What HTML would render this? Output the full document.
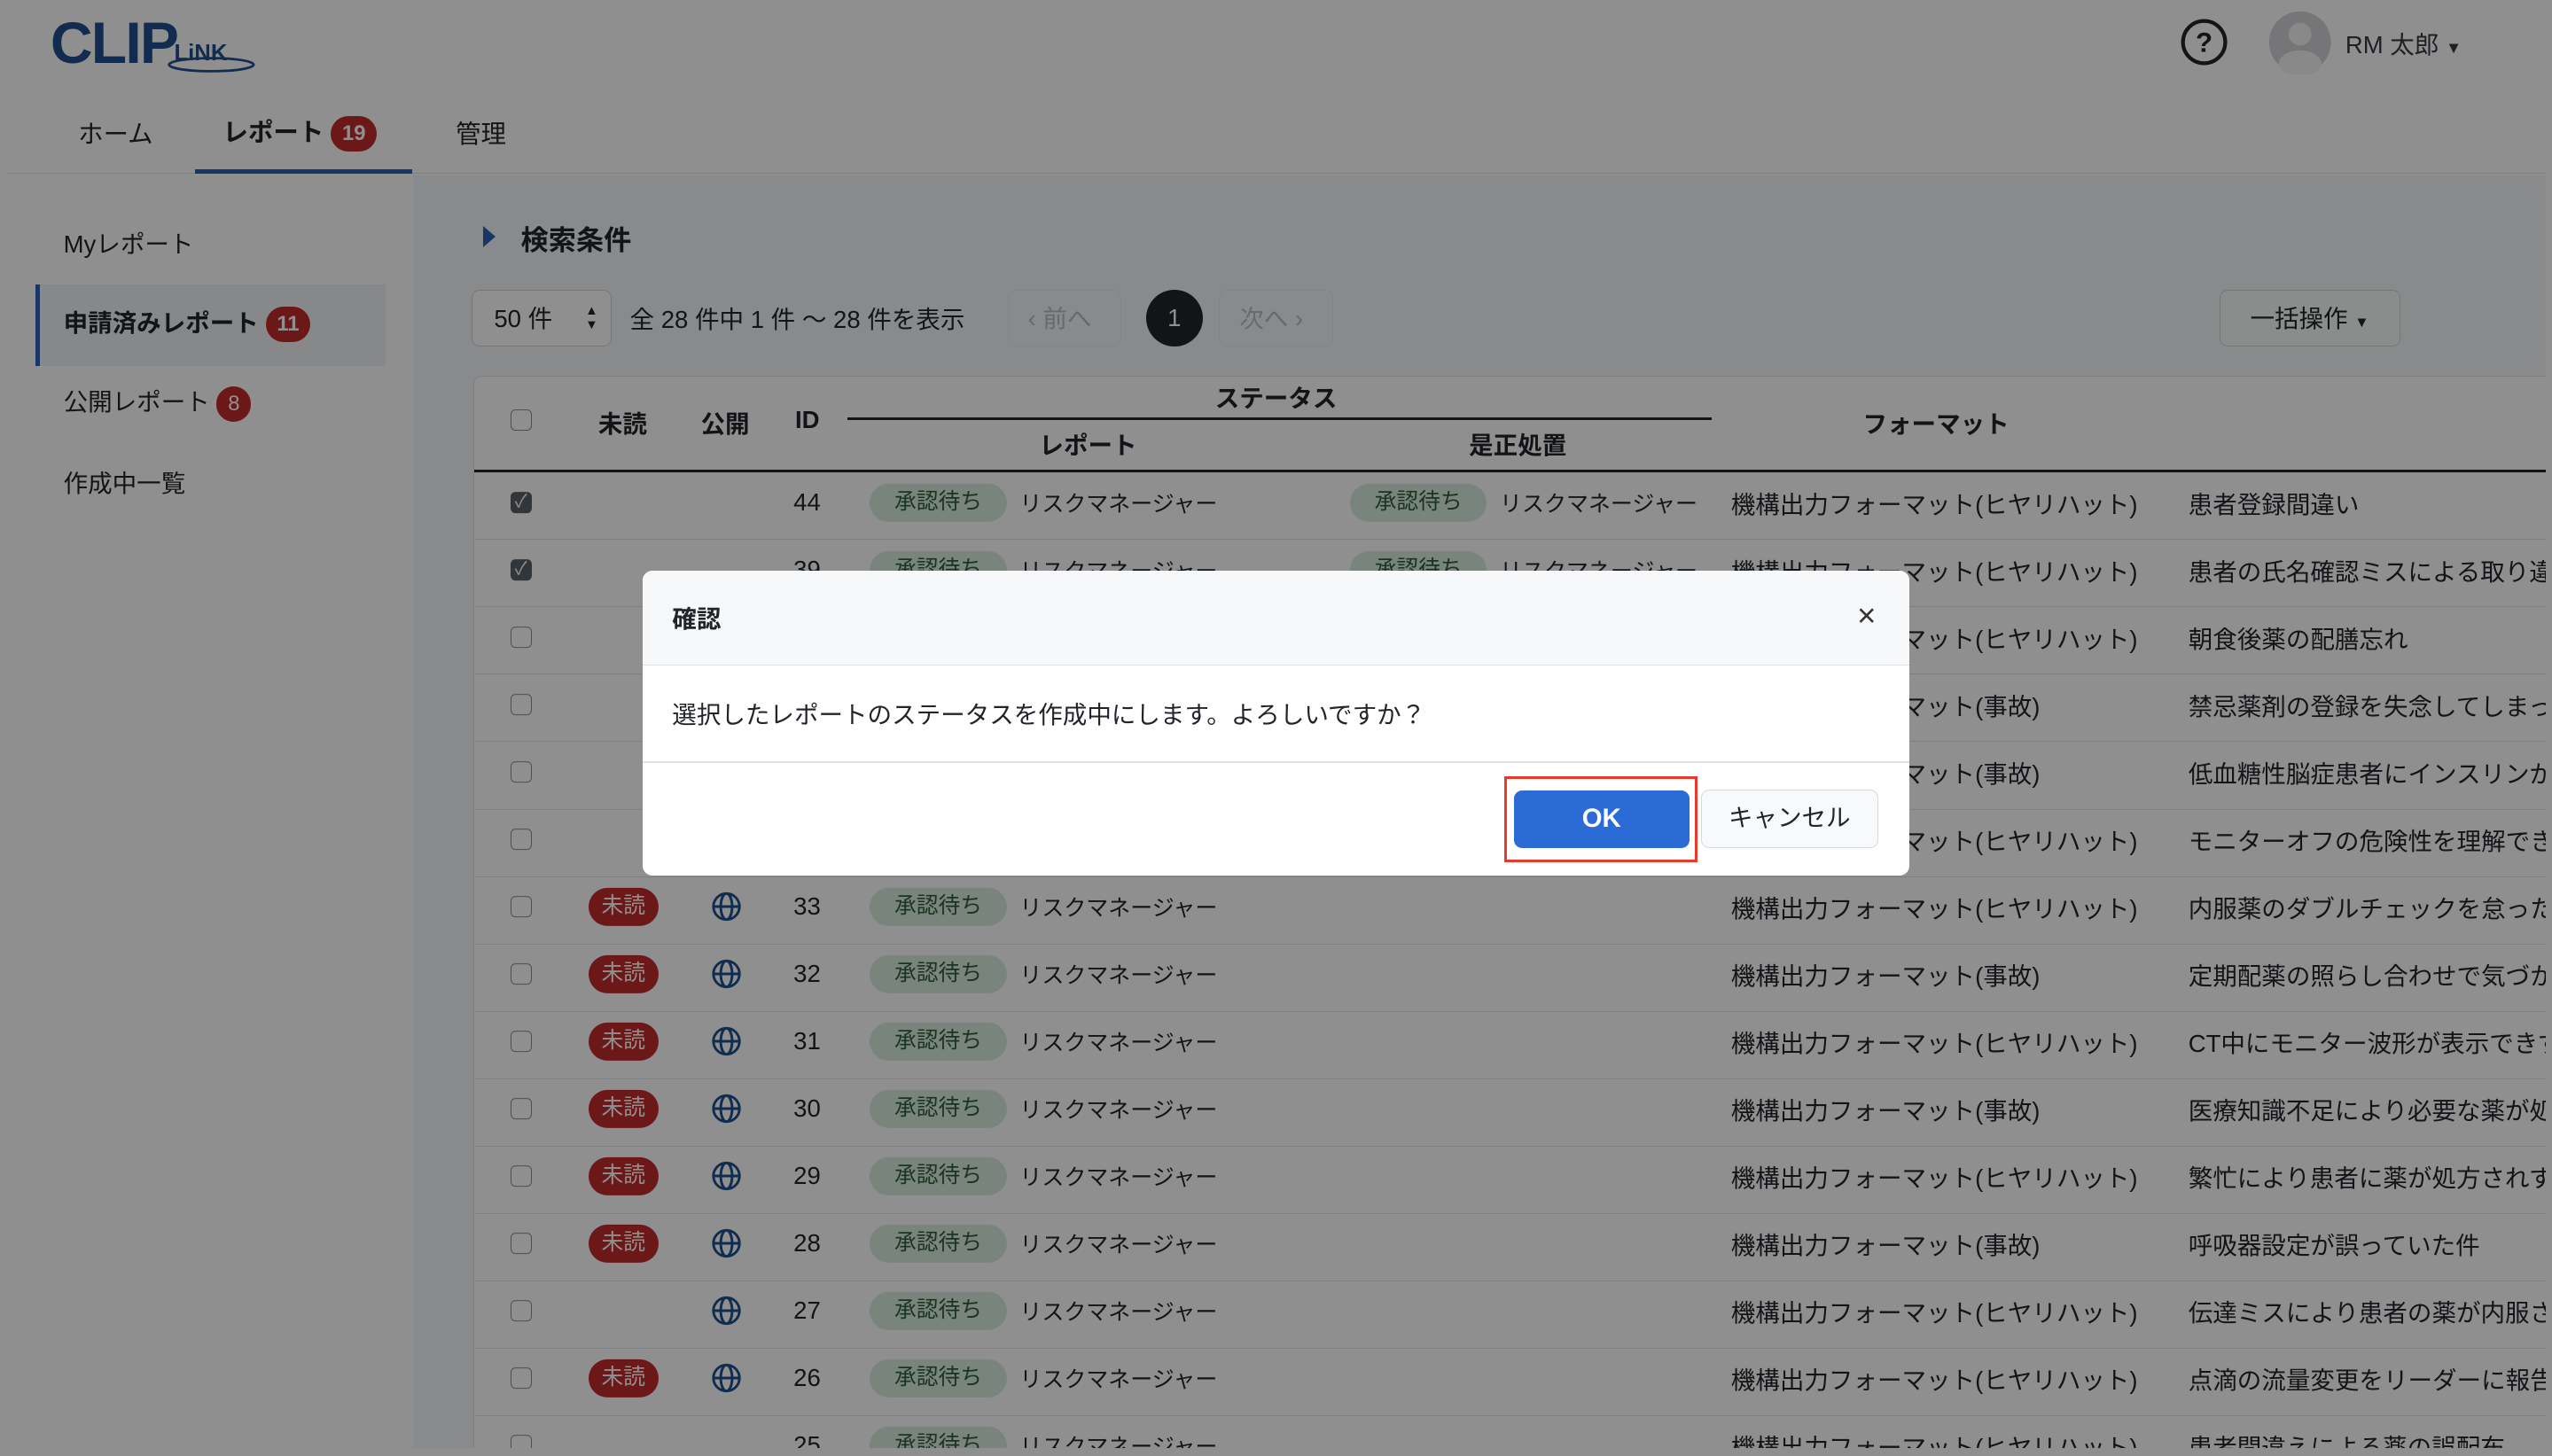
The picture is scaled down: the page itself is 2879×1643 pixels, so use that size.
<!DOCTYPE html>
<html><head><meta charset="utf-8">
<style>
*{box-sizing:border-box;margin:0;padding:0}
html,body{width:2879px;height:1643px;overflow:hidden;background:#fff}
#z{zoom:1.8361;width:1568px;height:895px;position:relative;font-family:"Liberation Sans","Noto Sans CJK JP",sans-serif;color:#212529;font-size:15px}
.abs{position:absolute}
#app{left:4px;top:0;width:1560px;height:890px;overflow:hidden;background:#fff;border-radius:10px 10px 0 0}
#hdr{left:0;top:0;width:1560px;height:107px;background:#fff;border-bottom:1px solid #dfe3e8}
#side{left:0;top:108px;width:250px;height:800px;background:#fff}
#main{left:250px;top:108px;width:1320px;height:800px;background:#f4f7fa}
.badge{display:inline-block;background:#c22b2b;color:#fff;border-radius:12px;font-size:13px;line-height:22px;height:22px;padding:0 7px;text-align:center;vertical-align:middle}
.nav{top:70px;font-size:15.5px}
.tbl{left:287px;top:231px;width:1290px;height:700px;background:#fff;border:1px solid #dde1e5;border-radius:5px}
.cb{width:13px;height:13px;border:1px solid #8a8f94;border-radius:3px;background:#fff}
.cbx{background:#5b6066;border-color:#5b6066;color:#fff;font-size:11px;line-height:11px;text-align:center}
.row{position:absolute;left:0;width:1290px;height:41.4px;border-bottom:1px solid #dde1e5;font-size:15px}
.row>*{position:absolute;top:calc(50% - 2px);transform:translateY(-50%);white-space:nowrap}
.rm{font-size:13.6px}
.pill{background:#d8eedd;color:#2f5e3a;border-radius:12px;font-size:13.5px;padding:0 15px;line-height:23px}
.mid{background:#c22b2b;color:#fff;border-radius:12px;font-size:13.5px;padding:0 8px;line-height:23px}
#ov{left:0;top:0;width:1568px;height:895px;background:rgba(0,0,0,0.44)}
#modal{left:395px;top:351px;width:778px;height:187px;background:#fff;border-radius:6px;overflow:hidden}
</style></head><body><div id="z">
<div id="app" class="abs">
 <div id="hdr" class="abs">
  <div class="abs" style="left:27px;top:6px;font-size:36px;font-weight:bold;color:#1f4f8b;letter-spacing:-1px">CLIP</div>
  <div class="abs" style="left:103px;top:25px;font-size:14px;font-weight:bold;color:#1f4f8b">LiNK</div>
  <svg class="abs" style="left:98px;top:34px" width="60" height="12"><ellipse cx="28" cy="6" rx="26" ry="4" fill="none" stroke="#1f4f8b" stroke-width="1.5"/></svg>
  <div class="abs nav" style="left:44px">ホーム</div>
  <div class="abs nav" style="left:133px;top:69px;font-weight:bold">レポート <span class="badge">19</span></div>
  <div class="abs" style="left:116px;top:104px;width:133px;height:3px;background:#2b5fb4"></div>
  <div class="abs nav" style="left:276px">管理</div>
  <svg class="abs" style="left:1335px;top:11px" width="30" height="30"><circle cx="15" cy="15" r="13" fill="none" stroke="#212529" stroke-width="2.3"/><text x="15" y="21" font-size="17" font-weight="bold" text-anchor="middle" fill="#212529" font-family="Liberation Sans">?</text></svg>
  <svg class="abs" style="left:1389px;top:6px" width="40" height="40"><circle cx="20" cy="20" r="19" fill="#d3d3d6"/><circle cx="20" cy="15" r="7" fill="#f4f4f5"/><ellipse cx="20" cy="33" rx="13" ry="8" fill="#f4f4f5"/></svg>
  <div class="abs" style="left:1437px;top:15px;font-size:15px;color:#343a40">RM 太郎 <span style="font-size:10px">▼</span></div>
 </div>
 <div id="side" class="abs">
  <div class="abs" style="left:35px;top:30px">Myレポート</div>
  <div class="abs" style="left:18px;top:67px;width:215px;height:50px;background:#f0f3f7;border-left:3px solid #2b5fb4"></div>
  <div class="abs" style="left:35px;top:78px;font-weight:bold">申請済みレポート <span class="badge">11</span></div>
  <div class="abs" style="left:35px;top:127px">公開レポート <span class="badge">8</span></div>
  <div class="abs" style="left:35px;top:177px">作成中一覧</div>
 </div>
 <div id="main" class="abs">
  <div class="abs" style="left:43px;top:31px;width:0;height:0;border-left:8px solid #2b5fb4;border-top:7px solid transparent;border-bottom:7px solid transparent"></div>
  <div class="abs" style="left:66px;top:26px;font-size:17px;font-weight:bold">検索条件</div>
  <div class="abs" style="left:36px;top:70px;width:86px;height:35px;border:1px solid #ced4da;border-radius:5px;background:#fff;padding:5px 13px">50 件 <span style="position:absolute;right:8px;top:8px;font-size:8px;line-height:9px">▲<br>▼</span></div>
  <div class="abs" style="left:133px;top:76px">全 28 件中 1 件 ～ 28 件を表示</div>
  <div class="abs" style="left:365px;top:70px;width:70px;height:35px;border:1px solid #e9ecef;border-radius:5px;color:#b8bcc0;padding:5px 12px">‹ 前へ</div>
  <div class="abs" style="left:450px;top:70px;width:35px;height:35px;border-radius:50%;background:#212529;color:#fff;text-align:center;line-height:35px">1</div>
  <div class="abs" style="left:495px;top:70px;width:70px;height:35px;border:1px solid #e9ecef;border-radius:5px;color:#b8bcc0;padding:5px 12px">次へ ›</div>
  <div class="abs" style="left:1110px;top:70px;width:111px;height:35px;border:1px solid #ced4da;border-radius:5px;background:#f8f9fa;padding:5px 18px">一括操作 <span style="font-size:9px">▼</span></div>
 </div>
 <div class="abs tbl">
  <div class="abs cb" style="left:22px;top:20px"></div>
  <div class="abs" style="left:76px;top:17px;font-weight:bold">未読</div>
  <div class="abs" style="left:139px;top:17px;font-weight:bold">公開</div>
  <div class="abs" style="left:197px;top:18px;font-weight:bold">ID</div>
  <div class="abs" style="left:455px;top:1px;font-weight:bold">ステータス</div>
  <div class="abs" style="left:229px;top:25px;width:531px;height:1.5px;background:#212529"></div>
  <div class="abs" style="left:347px;top:30px;font-weight:bold">レポート</div>
  <div class="abs" style="left:611px;top:30px;font-weight:bold">是正処置</div>
  <div class="abs" style="left:853px;top:17px;font-weight:bold">フォーマット</div>
  <div class="abs" style="left:0;top:57px;width:1290px;height:2px;background:#212529"></div>
  <div class="abs" style="left:0;top:59px;width:1290px">
   <div class="row" style="top:0"><div class="cb cbx" style="left:22px">✓</div><div style="left:196px">44</div><div class="pill" style="left:243px">承認待ち</div><div class="rm" style="left:335px">リスクマネージャー</div><div class="pill" style="left:538px">承認待ち</div><div class="rm" style="left:630px">リスクマネージャー</div><div style="left:772px">機構出力フォーマット(ヒヤリハット)</div><div style="left:1053px">患者登録間違い</div></div>
   <div class="row" style="top:41.4px"><div class="cb cbx" style="left:22px">✓</div><div style="left:196px">39</div><div class="pill" style="left:243px">承認待ち</div><div class="rm" style="left:335px">リスクマネージャー</div><div class="pill" style="left:538px">承認待ち</div><div class="rm" style="left:630px">リスクマネージャー</div><div style="left:772px">機構出力フォーマット(ヒヤリハット)</div><div style="left:1053px">患者の氏名確認ミスによる取り違え</div></div>
   <div class="row" style="top:82.8px"><div class="cb" style="left:22px"></div><div style="left:772px">機構出力フォーマット(ヒヤリハット)</div><div style="left:1053px">朝食後薬の配膳忘れ</div></div>
   <div class="row" style="top:124.2px"><div class="cb" style="left:22px"></div><div style="left:772px">機構出力フォーマット(事故)</div><div style="left:1053px">禁忌薬剤の登録を失念してしまった</div></div>
   <div class="row" style="top:165.6px"><div class="cb" style="left:22px"></div><div style="left:772px">機構出力フォーマット(事故)</div><div style="left:1053px">低血糖性脳症患者にインスリンが</div></div>
   <div class="row" style="top:207px"><div class="cb" style="left:22px"></div><div style="left:772px">機構出力フォーマット(ヒヤリハット)</div><div style="left:1053px">モニターオフの危険性を理解できず</div></div>
   <div class="row" style="top:248.4px"><div class="cb" style="left:22px"></div><div class="mid" style="left:70px">未読</div><svg style="left:146px" width="18" height="18"><g fill="none" stroke="#1f4f8b" stroke-width="1.6"><circle cx="9" cy="9" r="8"/><ellipse cx="9" cy="9" rx="3.5" ry="8"/><line x1="1" y1="9" x2="17" y2="9"/></g></svg><div style="left:196px">33</div><div class="pill" style="left:243px">承認待ち</div><div class="rm" style="left:335px">リスクマネージャー</div><div style="left:772px">機構出力フォーマット(ヒヤリハット)</div><div style="left:1053px">内服薬のダブルチェックを怠った</div></div>
   <div class="row" style="top:289.8px"><div class="cb" style="left:22px"></div><div class="mid" style="left:70px">未読</div><svg style="left:146px" width="18" height="18"><g fill="none" stroke="#1f4f8b" stroke-width="1.6"><circle cx="9" cy="9" r="8"/><ellipse cx="9" cy="9" rx="3.5" ry="8"/><line x1="1" y1="9" x2="17" y2="9"/></g></svg><div style="left:196px">32</div><div class="pill" style="left:243px">承認待ち</div><div class="rm" style="left:335px">リスクマネージャー</div><div style="left:772px">機構出力フォーマット(事故)</div><div style="left:1053px">定期配薬の照らし合わせで気づかず</div></div>
   <div class="row" style="top:331.2px"><div class="cb" style="left:22px"></div><div class="mid" style="left:70px">未読</div><svg style="left:146px" width="18" height="18"><g fill="none" stroke="#1f4f8b" stroke-width="1.6"><circle cx="9" cy="9" r="8"/><ellipse cx="9" cy="9" rx="3.5" ry="8"/><line x1="1" y1="9" x2="17" y2="9"/></g></svg><div style="left:196px">31</div><div class="pill" style="left:243px">承認待ち</div><div class="rm" style="left:335px">リスクマネージャー</div><div style="left:772px">機構出力フォーマット(ヒヤリハット)</div><div style="left:1053px">CT中にモニター波形が表示できず</div></div>
   <div class="row" style="top:372.6px"><div class="cb" style="left:22px"></div><div class="mid" style="left:70px">未読</div><svg style="left:146px" width="18" height="18"><g fill="none" stroke="#1f4f8b" stroke-width="1.6"><circle cx="9" cy="9" r="8"/><ellipse cx="9" cy="9" rx="3.5" ry="8"/><line x1="1" y1="9" x2="17" y2="9"/></g></svg><div style="left:196px">30</div><div class="pill" style="left:243px">承認待ち</div><div class="rm" style="left:335px">リスクマネージャー</div><div style="left:772px">機構出力フォーマット(事故)</div><div style="left:1053px">医療知識不足により必要な薬が処方</div></div>
   <div class="row" style="top:414px"><div class="cb" style="left:22px"></div><div class="mid" style="left:70px">未読</div><svg style="left:146px" width="18" height="18"><g fill="none" stroke="#1f4f8b" stroke-width="1.6"><circle cx="9" cy="9" r="8"/><ellipse cx="9" cy="9" rx="3.5" ry="8"/><line x1="1" y1="9" x2="17" y2="9"/></g></svg><div style="left:196px">29</div><div class="pill" style="left:243px">承認待ち</div><div class="rm" style="left:335px">リスクマネージャー</div><div style="left:772px">機構出力フォーマット(ヒヤリハット)</div><div style="left:1053px">繁忙により患者に薬が処方されず</div></div>
   <div class="row" style="top:455.4px"><div class="cb" style="left:22px"></div><div class="mid" style="left:70px">未読</div><svg style="left:146px" width="18" height="18"><g fill="none" stroke="#1f4f8b" stroke-width="1.6"><circle cx="9" cy="9" r="8"/><ellipse cx="9" cy="9" rx="3.5" ry="8"/><line x1="1" y1="9" x2="17" y2="9"/></g></svg><div style="left:196px">28</div><div class="pill" style="left:243px">承認待ち</div><div class="rm" style="left:335px">リスクマネージャー</div><div style="left:772px">機構出力フォーマット(事故)</div><div style="left:1053px">呼吸器設定が誤っていた件</div></div>
   <div class="row" style="top:496.8px"><div class="cb" style="left:22px"></div><svg style="left:146px" width="18" height="18"><g fill="none" stroke="#1f4f8b" stroke-width="1.6"><circle cx="9" cy="9" r="8"/><ellipse cx="9" cy="9" rx="3.5" ry="8"/><line x1="1" y1="9" x2="17" y2="9"/></g></svg><div style="left:196px">27</div><div class="pill" style="left:243px">承認待ち</div><div class="rm" style="left:335px">リスクマネージャー</div><div style="left:772px">機構出力フォーマット(ヒヤリハット)</div><div style="left:1053px">伝達ミスにより患者の薬が内服されず</div></div>
   <div class="row" style="top:538.2px"><div class="cb" style="left:22px"></div><div class="mid" style="left:70px">未読</div><svg style="left:146px" width="18" height="18"><g fill="none" stroke="#1f4f8b" stroke-width="1.6"><circle cx="9" cy="9" r="8"/><ellipse cx="9" cy="9" rx="3.5" ry="8"/><line x1="1" y1="9" x2="17" y2="9"/></g></svg><div style="left:196px">26</div><div class="pill" style="left:243px">承認待ち</div><div class="rm" style="left:335px">リスクマネージャー</div><div style="left:772px">機構出力フォーマット(ヒヤリハット)</div><div style="left:1053px">点滴の流量変更をリーダーに報告</div></div>
   <div class="row" style="top:579.6px"><div class="cb" style="left:22px"></div><div style="left:196px">25</div><div class="pill" style="left:243px">承認待ち</div><div class="rm" style="left:335px">リスクマネージャー</div><div style="left:772px">機構出力フォーマット(ヒヤリハット)</div><div style="left:1053px">患者間違えによる薬の誤配布</div></div>
  </div>
 </div>
</div>
<div id="ov" class="abs"></div>
<div id="modal" class="abs">
 <div class="abs" style="left:0;top:0;width:778px;height:58px;background:#f7f8fa;border-bottom:1px solid #dee2e6"></div>
 <div class="abs" style="left:18px;top:17px;font-weight:bold">確認</div>
 <div class="abs" style="left:746px;top:16px;font-size:20px;color:#333">×</div>
 <div class="abs" style="left:18px;top:76px">選択したレポートのステータスを作成中にします。よろしいですか？</div>
 <div class="abs" style="left:0;top:117px;width:778px;height:1px;background:#dee2e6"></div>
 <div class="abs" style="left:529px;top:126px;width:119px;height:53px;border:2px solid #e8392a"></div>
 <div class="abs" style="left:535px;top:135px;width:108px;height:35px;background:#2a6bd6;border-radius:5px;color:#fff;font-weight:bold;text-align:center;line-height:35px;font-size:16px">OK</div>
 <div class="abs" style="left:650px;top:134px;width:109px;height:36px;background:#f8f9fa;border:1px solid #d5d9dd;border-radius:5px;text-align:center;line-height:34px">キャンセル</div>
</div>
</div></body></html>
